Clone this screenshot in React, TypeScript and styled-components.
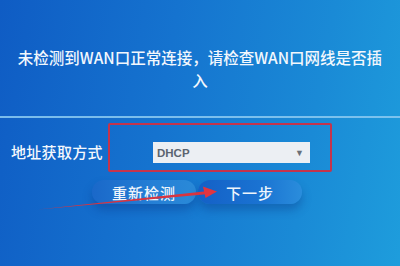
import styled, { createGlobalStyle } from "styled-components";

const Global = createGlobalStyle`
  html, body {
    margin: 0;
    padding: 0;
    background: #1566c9;
  }
  * {
    box-sizing: border-box;
  }
`

const Screen = styled.div`
  position: relative;
  width: 400px;
  height: 266px;
  overflow: hidden;
  background: linear-gradient(100deg, #0f5cc4 0%, #1573cf 40%, #1a8ad6 75%, #1e9ddc 100%);
  font-family: "Noto Sans CJK SC", "Noto Sans", sans-serif;
  color: #fff;
`

const Message = styled.p`
  margin: 0;
  padding: 46px 10px 0;
  font-size: 15.5px;
  font-weight: 500;
  line-height: 23px;
  text-align: center;
  color: #f2f7fd;
`

const Divider = styled.hr`
  margin: 24px 0 0;
  border: none;
  height: 2px;
  background: #86c6f0;
  opacity: .9;
`

const FormRow = styled.div`
  display: flex;
  align-items: stretch;
  margin-top: 5px;
  padding-left: 11px;
`

const Label = styled.span`
  width: 97px;
  display: flex;
  align-items: center;
  padding-top: 8px;
  font-size: 15px;
  font-weight: 500;
  letter-spacing: .3px;
  color: #f4f8fd;
`

// red annotation frame around the select
const Highlight = styled.div`
  width: 224px;
  height: 49px;
  border: 2px solid #c4344c;
  border-radius: 2px;
  padding: 17px 20px 0 43px;
`

const Select = styled.div`
  display: flex;
  align-items: center;
  justify-content: space-between;
  height: 21px;
  padding: 0 6px 0 4px;
  background: #eceff3;
  color: #5b6470;
  font-family: "Liberation Sans", Arial, sans-serif;
  font-size: 11.5px;
  font-weight: bold;
`

const Caret = styled.span`
  font-size: 9px;
  color: #6a7078;
`

const ButtonRow = styled.div`
  display: flex;
  justify-content: center;
  gap: 2px;
  margin-top: 8px;
  padding-right: 6px;
`

const Button = styled.button<{ $primary?: boolean }>`
  width: 104px;
  height: 24px;
  border: none;
  border-radius: 12px;
  font-family: "Noto Sans CJK SC", sans-serif;
  font-size: 15px;
  font-weight: 500;
  letter-spacing: 1px;
  color: #eef5fc;
  padding: 0;
  background: ${p => p.$primary
    ? "linear-gradient(90deg, #1460c6 0%, #1a73d2 60%, #2a8ddc 100%)"
    : "linear-gradient(90deg, #1a68c9 0%, #2580d6 60%, #2a8ad8 100%)"};
  box-shadow: 0 6px 10px rgba(10, 50, 130, .35);
`

const Arrow = styled.svg`
  position: absolute;
  left: 0;
  top: 0;
  pointer-events: none;
`

export default function App() {
    return (
        <>
            <Global/>
            <Screen>
                <Message>未检测到WAN口正常连接，请检查WAN口网线是否插<br/>入</Message>
                <Divider/>
                <FormRow>
                    <Label>地址获取方式</Label>
                    <Highlight>
                        <Select>
                            <span>DHCP</span>
                            <Caret>▼</Caret>
                        </Select>
                    </Highlight>
                </FormRow>
                <ButtonRow>
                    <Button>重新检测</Button>
                    <Button $primary>下一步</Button>
                </ButtonRow>
                <Arrow width="400" height="266" viewBox="0 0 400 266">
                    <polygon points="38,209.5 206,191.2 206.4,194.2" fill="#d9343f"/>
                    <polygon points="217,191.5 203,186.5 205.5,198" fill="#e2353f"/>
                </Arrow>
            </Screen>
        </>
    )
}
